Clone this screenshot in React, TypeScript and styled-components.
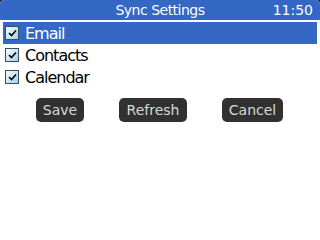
import React from 'react';
import styled, { createGlobalStyle } from 'styled-components';

const Global = createGlobalStyle`
  html, body { margin: 0; padding: 0; background: #000; }
  body { font-family: "DejaVu Sans", "Liberation Sans", sans-serif; }
`;

const Screen = styled.div`
  width: 320px;
  height: 240px;
  background: #fff;
  border-radius: 4px 4px 0 0;
  overflow: hidden;
  display: flex;
  flex-direction: column;
`;

const TitleBar = styled.header`
  height: 20px;
  background: #3567c4;
  color: #fff;
  display: grid;
  grid-template-columns: 1fr auto 1fr;
  align-items: center;
  padding: 0 7px;
`;

const Title = styled.span`
  grid-column: 2;
  font-size: 14px;
  letter-spacing: -0.5px;
  line-height: 20px;
`;

const Clock = styled.span`
  grid-column: 3;
  justify-self: end;
  font-size: 14px;
  line-height: 20px;
`;

const List = styled.ul`
  list-style: none;
  margin: 2px 0 0;
  padding: 0 3px;
  display: flex;
  flex-direction: column;
`;

const Row = styled.li<{ $selected?: boolean }>`
  height: 22px;
  display: flex;
  align-items: center;
  gap: 6px;
  padding-left: 2px;
  font-size: 16px;
  letter-spacing: -1px;
  color: ${(p) => (p.$selected ? '#fff' : '#000')};
  background: ${(p) => (p.$selected ? '#3567c4' : 'transparent')};
`;

const Box = styled.span`
  width: 14px;
  height: 14px;
  box-sizing: border-box;
  border: 1px solid #3e4b5c;
  background: linear-gradient(135deg, #f2fafe 0%, #cdeaf7 45%, #9fd3ec 100%);
  display: flex;
  align-items: center;
  justify-content: center;
`;

const Buttons = styled.div`
  display: flex;
  padding: 10px 0 0 36px;
`;

const Button = styled.button<{ $w: number; $ml: number }>`
  width: ${(p) => p.$w}px;
  margin-left: ${(p) => p.$ml}px;
  height: 24px;
  border: none;
  border-radius: 5px;
  background: #313131;
  color: #d8d8d8;
  font-family: "DejaVu Sans", "Liberation Sans", sans-serif;
  font-size: 14px;
  padding: 0;
`;

function Check() {
  return (
    <Box>
      <svg width="9" height="8" viewBox="0 0 9 8">
        <path d="M1 4 L3.5 6.5 L8 1.5" stroke="#000" strokeWidth="1.6" fill="none" />
      </svg>
    </Box>
  );
}

const items = ['Email', 'Contacts', 'Calendar'];

export default function App() {
  return (
    <>
      <Global />
      <Screen>
        <TitleBar>
          <Title>Sync Settings</Title>
          <Clock>11:50</Clock>
        </TitleBar>
        <List>
          {items.map((it, i) => (
            <Row key={it} $selected={i === 0}>
              <Check />
              {it}
            </Row>
          ))}
        </List>
        <Buttons>
          <Button $w={48} $ml={0}>Save</Button>
          <Button $w={68} $ml={35}>Refresh</Button>
          <Button $w={61} $ml={35}>Cancel</Button>
        </Buttons>
      </Screen>
    </>
  );
}
